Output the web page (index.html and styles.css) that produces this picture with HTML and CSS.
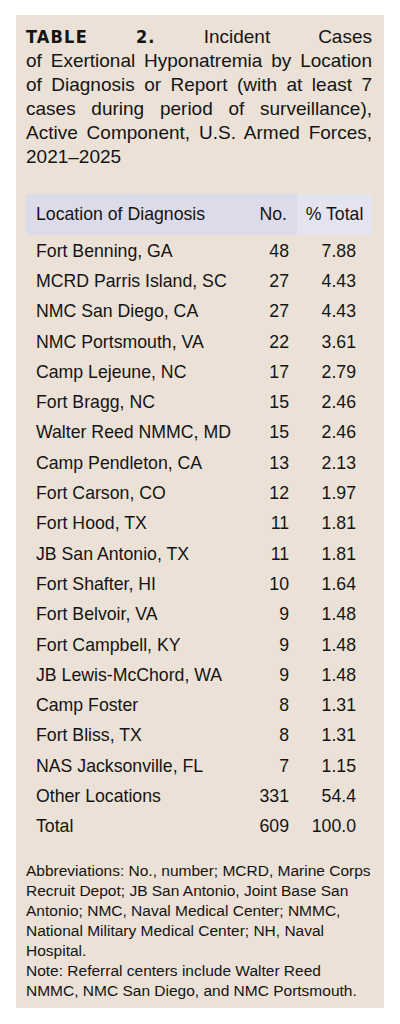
FILE: index.html
```html
<!DOCTYPE html>
<html>
<head>
<meta charset="utf-8">
<link rel="stylesheet" href="styles.css">
</head>
<body>
<div class="panel">
  <p class="title"><span class="line1"><b class="label">TABLE</b> <b class="label">2.</b> Incident Cases</span> of Exertional Hyponatremia by Location of Diagnosis or Report (with at least 7 cases during period of surveillance), Active Component, U.S. Armed Forces, 2021–2025</p>
  <table class="data">
    <colgroup><col class="c-loc"><col class="c-no"><col class="c-pct"></colgroup>
    <thead>
      <tr><th class="loc">Location of Diagnosis</th><th class="no">No.</th><th class="pct">% Total</th></tr>
    </thead>
    <tbody>
      <tr><td class="loc">Fort Benning, GA</td><td class="no">48</td><td class="pct">7.88</td></tr>
      <tr><td class="loc">MCRD Parris Island, SC</td><td class="no">27</td><td class="pct">4.43</td></tr>
      <tr><td class="loc">NMC San Diego, CA</td><td class="no">27</td><td class="pct">4.43</td></tr>
      <tr><td class="loc">NMC Portsmouth, VA</td><td class="no">22</td><td class="pct">3.61</td></tr>
      <tr><td class="loc">Camp Lejeune, NC</td><td class="no">17</td><td class="pct">2.79</td></tr>
      <tr><td class="loc">Fort Bragg, NC</td><td class="no">15</td><td class="pct">2.46</td></tr>
      <tr><td class="loc">Walter Reed NMMC, MD</td><td class="no">15</td><td class="pct">2.46</td></tr>
      <tr><td class="loc">Camp Pendleton, CA</td><td class="no">13</td><td class="pct">2.13</td></tr>
      <tr><td class="loc">Fort Carson, CO</td><td class="no">12</td><td class="pct">1.97</td></tr>
      <tr><td class="loc">Fort Hood, TX</td><td class="no">11</td><td class="pct">1.81</td></tr>
      <tr><td class="loc">JB San Antonio, TX</td><td class="no">11</td><td class="pct">1.81</td></tr>
      <tr><td class="loc">Fort Shafter, HI</td><td class="no">10</td><td class="pct">1.64</td></tr>
      <tr><td class="loc">Fort Belvoir, VA</td><td class="no">9</td><td class="pct">1.48</td></tr>
      <tr><td class="loc">Fort Campbell, KY</td><td class="no">9</td><td class="pct">1.48</td></tr>
      <tr><td class="loc">JB Lewis-McChord, WA</td><td class="no">9</td><td class="pct">1.48</td></tr>
      <tr><td class="loc">Camp Foster</td><td class="no">8</td><td class="pct">1.31</td></tr>
      <tr><td class="loc">Fort Bliss, TX</td><td class="no">8</td><td class="pct">1.31</td></tr>
      <tr><td class="loc">NAS Jacksonville, FL</td><td class="no">7</td><td class="pct">1.15</td></tr>
      <tr><td class="loc">Other Locations</td><td class="no">331</td><td class="pct">54.4</td></tr>
      <tr><td class="loc">Total</td><td class="no">609</td><td class="pct">100.0</td></tr>
    </tbody>
  </table>
  <p class="notes">Abbreviations: No., number; MCRD, Marine Corps Recruit Depot; JB San Antonio, Joint Base San Antonio; NMC, Naval Medical Center; NMMC, National Military Medical Center; NH, Naval Hospital.<br>Note: Referral centers include Walter Reed NMMC, NMC San Diego, and NMC Portsmouth.</p>
</div>
</body>
</html>
```
FILE: styles.css
```css
html, body {
  margin: 0;
  padding: 0;
  background: #ffffff;
}
body {
  font-family: "Liberation Sans", Arial, sans-serif;
  color: #141414;
}
.panel {
  box-sizing: border-box;
  margin: 15px 0 0 16px;
  width: 368px;
  height: 993px;
  padding: 10px 12px 0 10px;
  background: #ebe1d6;
}
.title {
  margin: 0;
  font-size: 19px;
  line-height: 24px;
  text-align: justify;
}
.line1 {
  display: block;
  text-align: justify;
  text-align-last: justify;
}
.label {
  font-family: "Liberation Sans Narrow", "DejaVu Sans Condensed", sans-serif;
  font-weight: bold;
  font-size: 18px;
  letter-spacing: 1.2px;
}
.data {
  margin-top: 25px;
  width: 346px;
  table-layout: fixed;
  border-collapse: collapse;
  font-size: 17.7px;
}
.c-loc { width: 221px; }
.c-no { width: 50px; }
.c-pct { width: 75px; }
.data th,
.data td {
  box-sizing: border-box;
  padding: 0;
  white-space: nowrap;
}
.data th {
  font-weight: normal;
  height: 41px;
  background: #dcdbe9;
}
.data th.pct {
  background: #e4e3f0;
  text-align: center;
}
.data td {
  height: 30.3px;
  padding-top: 2px;
}
.data .loc {
  text-align: left;
  padding-left: 10px;
}
.data .no {
  text-align: right;
  padding-right: 8px;
}
.data th.no {
  padding-right: 10px;
}
.data td.pct {
  text-align: right;
  padding-right: 16px;
}
.notes {
  margin: 20px 0 0 0;
  font-size: 15.5px;
  line-height: 20px;
}
```
